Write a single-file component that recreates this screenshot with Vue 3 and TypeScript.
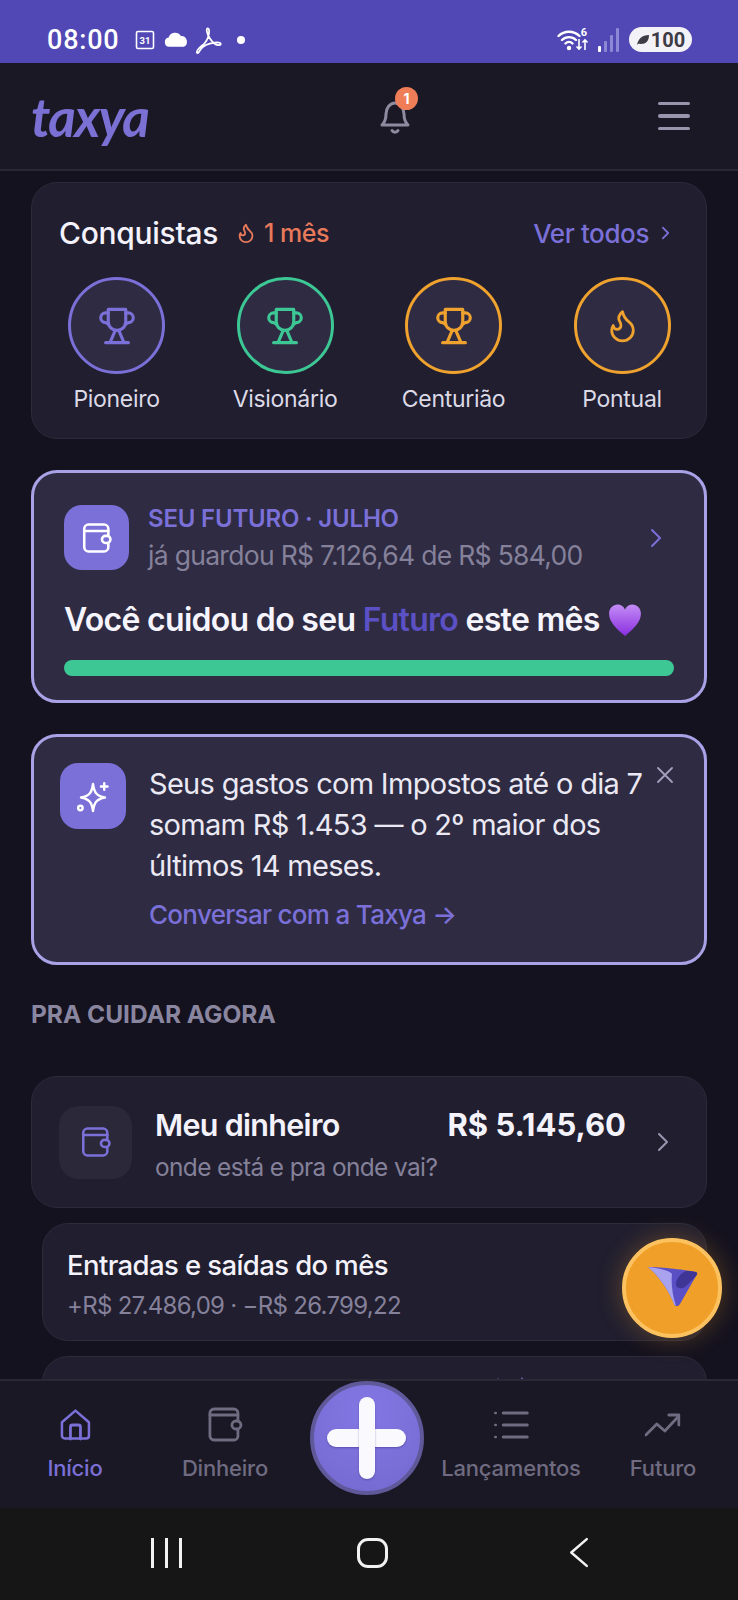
<template>
  <div class="app">
    <header class="status">
      <span class="time">08:00</span>
      <svg class="st-cal" viewBox="0 0 20 20"><rect x="1.5" y="1.5" width="17" height="17" rx="1.5" fill="none" stroke="#fff" stroke-width="1.6" /><text x="10" y="14" text-anchor="middle" font-size="9.5" font-weight="700" fill="#fff" font-family="Roboto, sans-serif">31</text></svg>
      <svg class="st-cloud" viewBox="0 0 24 14"><path d="M5 14a4.5 4.5 0 0 1-.6-8.9A6.5 6.5 0 0 1 16.2 3.6 5.5 5.5 0 0 1 19 14z" fill="#fff" /></svg>
      <svg class="st-pdf" viewBox="0 0 26 28"><path d="M2 26c-1.500-2 3-6 7-9 3-3 5-9 4.500-13-.3-2.500-2.500-2-2.200.5.5 5 5 11 8 13 2 1 5 1.500 5.500 0 .3-1.500-3-2-6-1.500-5 .8-11 3-13 6-1 1.500-2.800 5-3.800 4z" fill="none" stroke="#fff" stroke-width="1.700" stroke-linejoin="round" /></svg>
      <span class="st-dot"></span>
      <span class="st-space"></span>
      <svg class="st-wifi" viewBox="0 0 32 26">
        <path d="M1.500 9a15 15 0 0 1 21 0M5 13a10 10 0 0 1 14 0M8.500 16.500a5 5 0 0 1 7 0" fill="none" stroke="#fff" stroke-width="2.400" stroke-linecap="round" />
        <circle cx="12" cy="21" r="2.200" fill="#fff" />
        <text x="27" y="9" text-anchor="middle" font-size="11" font-weight="700" fill="#fff" font-family="Roboto, sans-serif">6</text>
        <path d="M22 12v10m-2.500-2.500L22 22l2.500-2.500M28 23V13m-2.500 2.500L28 13l2.500 2.500" fill="none" stroke="#fff" stroke-width="1.600" />
      </svg>
      <svg class="st-signal" viewBox="0 0 22 24">
        <rect x="0" y="18" width="3" height="6" rx="1" fill="#fff" />
        <rect x="6" y="13" width="3" height="11" rx="1" fill="#8d87d6" />
        <rect x="12" y="7" width="3" height="17" rx="1" fill="#8d87d6" />
        <rect x="18" y="0" width="3" height="24" rx="1" fill="#8d87d6" />
      </svg>
      <span class="battery">
        <svg viewBox="0 0 14 12"><path d="M1 11C2 5 6 1 13 1c0 6-3 9-8 9-1.500 0-2.500-.3-3 0z" fill="#3d3b46" /></svg>
        100
      </span>
    </header>

    <div class="topbar">
      <span class="logo">taxya</span>
      <div class="bell-wrap">
        <svg class="bell" viewBox="0 0 34 38" fill="none" stroke="#8e8a9f" stroke-width="3" stroke-linecap="round" stroke-linejoin="round">
          <path d="M4 28c2-2 4-5 4-11 0-6 4-11 9-11s9 5 9 11c0 6 2 9 4 11z" />
          <path d="M14 33.500a3.500 3.500 0 0 0 6 0" />
        </svg>
        <span class="badge">1</span>
      </div>
      <div class="burger"><i></i><i></i><i></i></div>
    </div>

    <main class="content">
      <section class="card ach">
        <div class="ach-head">
          <h2>Conquistas</h2>
          <span class="streak">
            <svg viewBox="0 0 24 24" fill="none" stroke="#e8795a" stroke-width="2" stroke-linecap="round" stroke-linejoin="round"><path :d="flamePath" /></svg>
            1 mês
          </span>
          <span class="see-all">Ver todos
            <svg viewBox="0 0 12 18" fill="none" stroke="#7b70d8" stroke-width="2" stroke-linecap="round" stroke-linejoin="round"><path d="M3 3l6 6-6 6" /></svg>
          </span>
        </div>
        <div class="ach-row">
          <div v-for="b in badges" :key="b.label" class="ach-item">
            <div class="ach-circle" :style="{ borderColor: b.color }">
              <svg :class="{ small: b.flame }" viewBox="0 0 24 24" fill="none" :stroke="b.color" stroke-width="1.800" stroke-linecap="round" stroke-linejoin="round">
                <template v-if="b.flame"><path :d="flamePath" /></template>
                <template v-else>
                  <path d="M7 2.500h10v7a5 5 0 0 1-10 0z" />
                  <path d="M7 4.500H5.500a2.800 2.800 0 0 0 0 5.600L7.300 11M17 4.500h1.500a2.800 2.800 0 0 1 0 5.600L16.700 11" />
                  <path d="M11 14.500L8 21.500M13 14.500l3 7M5.500 21.500h13" />
                </template>
              </svg>
            </div>
            <span>{{ b.label }}</span>
          </div>
        </div>
      </section>

      <section class="card hl future">
        <div class="future-top">
          <div class="icon-box solid">
            <svg viewBox="0 0 24 24" fill="none" stroke="#fff" stroke-width="1.800" stroke-linecap="round" stroke-linejoin="round"><rect x="3" y="2.500" width="17" height="19" rx="3" /><path d="M3 7h17" /><rect x="15.500" y="10.500" width="6" height="5" rx="2.500" fill="#7b70d8" /></svg>
          </div>
          <div class="future-text">
            <div class="eyebrow">SEU FUTURO · JULHO</div>
            <div class="future-sub">já guardou R$ 7.126,64 de R$ 584,00</div>
          </div>
          <svg class="chev purple" viewBox="0 0 12 20" fill="none" stroke="#7b70d8" stroke-width="2" stroke-linecap="round" stroke-linejoin="round"><path d="M2 2l8 8-8 8" /></svg>
        </div>
        <div class="future-main">Você cuidou do seu <b>Futuro</b> este mês<svg class="heart" viewBox="0 0 32 32">
            <defs><linearGradient id="heartG" x1="0" y1="0" x2="0" y2="1"><stop offset="0" stop-color="#c48cf5" /><stop offset="1" stop-color="#8a2fe0" /></linearGradient></defs>
            <path d="M16 31C8 24 1 18 1 10c0-5 4-8.500 8-8.500 3 0 5.500 1.500 7 4.500 1.500-3 4-4.500 7-4.500 4 0 8 3.500 8 8.500 0 8-7 14-15 21z" fill="url(#heartG)" />
          </svg></div>
        <div class="bar"></div>
      </section>

      <section class="card hl tip">
        <div class="icon-box solid tip-icon">
          <svg viewBox="0 0 24 24" fill="none" stroke="#fff" stroke-width="1.600" stroke-linecap="round" stroke-linejoin="round">
            <path d="M12 4c.8 6 2.500 8 8 9-5.500 1-7.200 3-8 9-.8-6-2.500-8-8-9 5.500-1 7.200-3 8-9z" />
            <path d="M19.500 3.500v4.400M17.300 5.700h4.400" />
            <circle cx="3.600" cy="20" r="1.500" />
          </svg>
        </div>
        <div class="tip-body">
          <p>Seus gastos com Impostos até o dia 7<br />somam R$ 1.453 — o 2º maior dos<br />últimos 14 meses.</p>
          <span class="tip-link">Conversar com a Taxya →</span>
        </div>
        <svg class="close" viewBox="0 0 18 18" fill="none" stroke="#a5a0bd" stroke-width="1.800" stroke-linecap="round"><path d="M2 2l14 14M16 2L2 16" /></svg>
      </section>

      <h3 class="section">PRA CUIDAR AGORA</h3>

      <section class="card money">
        <div class="icon-box soft">
          <svg viewBox="0 0 24 24" fill="none" stroke="#7b70d8" stroke-width="1.800" stroke-linecap="round" stroke-linejoin="round"><rect x="3" y="2.500" width="17" height="19" rx="3" /><path d="M3 7h17" /><rect x="15.500" y="10.500" width="6" height="5" rx="2.500" fill="#2a2839" /></svg>
        </div>
        <div class="money-text">
          <div class="money-line"><strong>Meu dinheiro</strong><strong class="amount">R$ 5.145,60</strong></div>
          <div class="muted">onde está e pra onde vai?</div>
        </div>
        <svg class="chev" viewBox="0 0 12 20" fill="none" stroke="#9a95ae" stroke-width="2" stroke-linecap="round" stroke-linejoin="round"><path d="M2 2l8 8-8 8" /></svg>
      </section>

      <section class="card sub">
        <div class="sub-title">Entradas e saídas do mês</div>
        <div class="muted">+R$ 27.486,09 · −R$ 26.799,22</div>
      </section>

      <section class="card sub clipped">
        <svg viewBox="0 0 36 6"><path d="M2 6l3-5 3 5zM26 6l3-6 3 6z" fill="#7b70d8" /></svg>
      </section>
    </main>

    <nav class="tabs">
      <div v-for="t in tabs" :key="t.label" class="tab" :class="[t.cls, { active: t.active }]">
        <svg viewBox="0 0 36 36" fill="none" :stroke="t.active ? '#7b70d8' : '#6f6b80'" stroke-width="2.800" stroke-linecap="round" stroke-linejoin="round" v-html="t.icon"></svg>
        <span>{{ t.label }}</span>
      </div>
    </nav>

    <div class="sysnav">
      <div class="sys-lines"><i></i><i></i><i></i></div>
      <div class="sys-home"></div>
      <svg class="sys-back" viewBox="0 0 20 30" fill="none" stroke="#f2f2f2" stroke-width="2.400" stroke-linecap="round" stroke-linejoin="round"><path d="M18 2L3 15l15 13" /></svg>
    </div>

    <div class="plus"><i class="h"></i><i class="v"></i></div>

    <div class="fab">
      <svg viewBox="0 0 51 42">
        <path d="M1 1C15 1 40 4 49 6c2 1 1 3 0 4L33 38c-2 3-5 3-6 0C22 25 12 10 1 1z" fill="#5a4fc4" />
        <path d="M1 1c9 1 21 3 24 7-1 8 0 20 4 32-1 0-1.500-1-2-2C22 25 12 10 1 1z" fill="#a9a2ef" />
        <path d="M39 5c5 0 9 1 10 1 2 1 1 3 0 4L38 21c-5 3-10 0-9-4 1-5 5-10 10-12z" fill="#3e3597" />
      </svg>
    </div>
  </div>
</template>

<script setup lang="ts">
interface Badge {
  label: string;
  color: string;
  flame?: boolean;
}

interface Tab {
  label: string;
  icon: string;
  cls: string;
  active?: boolean;
}

const flamePath =
  'M8.5 14.5A2.5 2.5 0 0 0 11 12c0-1.38-.5-2-1-3-1.072-2.143-.224-4.054 2-6 .5 2.5 2 4.9 4 6.5 2 1.6 3 3.5 3 5.5a7 7 0 1 1-14 0c0-1.153.433-2.294 1-3a2.5 2.5 0 0 0 2.5 2.5z';

const badges: Badge[] = [
  { label: 'Pioneiro', color: '#7b70d8' },
  { label: 'Visionário', color: '#3cc795' },
  { label: 'Centurião', color: '#f0a22e' },
  { label: 'Pontual', color: '#f0a22e', flame: true },
];

const tabs: Tab[] = [
  {
    label: 'Início',
    cls: 't1',
    active: true,
    icon: '<path d="M3 15L18 2l15 13v15a3 3 0 0 1-3 3H6a3 3 0 0 1-3-3z" transform="translate(1.800 1.800) scale(.9)"/><path d="M13 32V20a2 2 0 0 1 2-2h6a2 2 0 0 1 2 2v12"/>',
  },
  {
    label: 'Dinheiro',
    cls: 't2',
    icon: '<rect x="3" y="2" width="28" height="31" rx="4"/><path d="M3 8h28"/><rect x="25" y="14" width="9" height="8" rx="4" fill="#1a1825"/>',
  },
  {
    label: 'Lançamentos',
    cls: 't3',
    icon: '<path d="M10 6h24M10 18h24M10 30h24" stroke-width="3"/><path d="M2 6h.5M2 18h.5M2 30h.5" stroke-width="2.500"/>',
  },
  {
    label: 'Futuro',
    cls: 't4',
    icon: '<path d="M1 28l11-11 8 7L34 9"/><path d="M24 8h10v10"/>',
  },
];
</script>

<style scoped>
.app {
  position: relative;
  display: flex;
  flex-direction: column;
  width: 738px;
  height: 1600px;
  overflow: hidden;
  background: #14121f;
  color: #f4f2fb;
  font-family: Inter, 'Noto Sans', sans-serif;
}

.status {
  display: flex;
  align-items: center;
  flex: none;
  height: 63px;
  padding: 16px 46px 0 47px;
  box-sizing: border-box;
  background: #5148b5;
  color: #fff;
}
.time {
  font: 500 27px Roboto, sans-serif;
  letter-spacing: 0.800px;
  width: 88px;
}
.st-cal { width: 20px; height: 20px; margin-right: 9px; }
.st-cloud { width: 25px; height: 15px; margin-right: 6px; }
.st-pdf { width: 27px; height: 29px; margin-top: 2px; margin-right: 15px; }
.st-dot { width: 8px; height: 8px; border-radius: 50%; background: #fff; }
.st-space { flex: 1; }
.st-wifi { width: 32px; height: 26px; margin-right: 9px; }
.st-signal { width: 22px; height: 24px; margin-right: 9px; }
.battery {
  display: flex;
  align-items: center;
  justify-content: center;
  gap: 1px;
  width: 63px;
  height: 25px;
  border-radius: 13px;
  background: #f3f2f6;
  color: #3d3b46;
  font: 700 20px Roboto, sans-serif;
}
.battery svg { width: 14px; height: 12px; }

.topbar {
  display: grid;
  grid-template-columns: 347px 34px 1fr;
  align-items: center;
  flex: none;
  height: 108px;
  padding: 0 48px 0 31px;
  box-sizing: border-box;
  background: #1a1825;
  border-bottom: 2px solid #2a2835;
}
.logo {
  font: italic 700 53px Lato, sans-serif;
  letter-spacing: -1.500px;
  color: #7b70d4;
}
.bell-wrap { position: relative; width: 34px; height: 38px; }
.bell { width: 34px; height: 38px; }
.badge {
  position: absolute;
  top: -10px;
  left: 17px;
  width: 23px;
  height: 23px;
  border-radius: 50%;
  background: #ee7d58;
  color: #fff;
  font-size: 14px;
  font-weight: 700;
  line-height: 23px;
  text-align: center;
}
.burger { display: flex; flex-direction: column; gap: 9px; width: 32px; justify-self: end; }
.burger i { height: 3.500px; border-radius: 2px; background: #9a95ae; }

.content {
  flex: 1;
  min-height: 0;
  overflow: hidden;
  padding: 11px 31px 0;
}
.card {
  box-sizing: border-box;
  border: 1px solid #2c2a3b;
  border-radius: 26px;
  background: #201e2f;
}
.hl {
  border: 3px solid #a9a2e6;
  background: #2e2b43;
}

.ach { height: 257px; padding: 28px 27px 0; }
.ach-head { display: flex; align-items: center; height: 44px; }
.ach-head h2 { margin: 0; font-size: 30px; font-weight: 500; letter-spacing: -0.300px; color: #f4f2fb; }
.streak {
  display: flex;
  align-items: center;
  gap: 7px;
  margin-left: 17px;
  font-size: 25px;
  font-weight: 500;
  letter-spacing: -0.500px;
  color: #e8795a;
}
.streak svg { width: 22px; height: 24px; }
.see-all {
  display: flex;
  align-items: center;
  gap: 11px;
  margin-left: auto;
  margin-right: 8px;
  font-size: 26px;
  font-weight: 500;
  letter-spacing: -0.400px;
  color: #7b70d8;
}
.see-all svg { width: 11px; height: 16px; }
.ach-row {
  display: grid;
  grid-template-columns: repeat(4, 168.500px);
  margin: 22px 0 0 -26.700px;
}
.ach-item { display: flex; flex-direction: column; align-items: center; gap: 11px; }
.ach-circle {
  display: flex;
  align-items: center;
  justify-content: center;
  box-sizing: border-box;
  width: 97px;
  height: 97px;
  border: 3px solid;
  border-radius: 50%;
  background: #2e2b43;
}
.ach-circle svg { width: 42px; height: 42px; }
.ach-circle svg.small { width: 37px; height: 37px; }
.ach-item span { font-size: 23px; color: #dcdae6; letter-spacing: -0.300px; }

.future { height: 233px; margin-top: 31px; padding: 31px 30px 0; }
.future-top { display: flex; align-items: center; }
.icon-box {
  display: flex;
  align-items: center;
  justify-content: center;
  flex: none;
  width: 65px;
  height: 65px;
  border-radius: 18px;
}
.icon-box svg { width: 34px; height: 34px; }
.solid { background: #7b70d8; }
.soft { width: 73px; height: 73px; background: #2a2839; border-radius: 20px; }
.future-text { flex: 1; margin-left: 19px; }
.eyebrow { font-size: 24px; font-weight: 600; letter-spacing: -0.200px; color: #7b70d8; }
.future-sub { margin-top: 6px; font-size: 26.500px; letter-spacing: -0.700px; color: #85819a; }
.chev { width: 12px; height: 20px; flex: none; }
.chev.purple { margin-right: 12px; }
.future-main {
  display: flex;
  align-items: center;
  margin-top: 29px;
  font-size: 32px;
  font-weight: 600;
  letter-spacing: -0.700px;
  white-space: pre;
  color: #f6f4fc;
}
.future-main b { font-weight: 600; color: #5b50c4; }
.heart { width: 34px; height: 34px; margin-left: 8px; }
.bar { height: 16px; margin-top: 21px; border-radius: 8px; background: #3cc795; }

.tip {
  position: relative;
  display: flex;
  height: 231px;
  margin-top: 31px;
  padding: 26px 0 0 26px;
}
.tip-icon { width: 66px; height: 66px; }
.tip-icon svg { width: 36px; height: 36px; }
.tip-body { margin-left: 23px; }
.tip-body p {
  margin: 0;
  font-size: 29px;
  line-height: 41px;
  letter-spacing: -0.700px;
  color: #ebe9f3;
}
.tip-link {
  display: block;
  margin-top: 13px;
  font-size: 26px;
  font-weight: 500;
  letter-spacing: -0.700px;
  color: #7b70d8;
}
.close { position: absolute; top: 29px; right: 30px; width: 18px; height: 18px; }

.section {
  margin: 34px 0 0;
  font-size: 24.500px;
  font-weight: 700;
  letter-spacing: 0;
  color: #8a86a0;
}

.money {
  display: flex;
  align-items: center;
  height: 132px;
  margin-top: 47px;
  padding: 0 37px 0 27px;
}
.money-text { flex: 1; margin-left: 23px; padding: 3px 31px 0 0; }
.money-line { display: flex; justify-content: space-between; font-size: 30.500px; letter-spacing: -0.700px; }
.money-line strong { font-weight: 600; }
.money-line .amount { font-size: 31px; font-weight: 700; letter-spacing: 0; }
.muted { font-size: 24px; letter-spacing: -0.600px; color: #85819a; }
.money .muted { margin-top: 9px; font-size: 24.400px; }

.sub { height: 118px; margin: 15px 0 0 11px; padding: 24px 24px 0; }
.sub-title { font-size: 27.500px; font-weight: 500; letter-spacing: -0.600px; }
.sub .muted { margin-top: 9px; letter-spacing: -0.700px; }
.clipped { height: 100px; padding: 20px 0 0 450px; }
.clipped svg { display: block; width: 36px; height: 6px; }

.tabs {
  position: relative;
  display: flex;
  flex: none;
  height: 129px;
  box-sizing: border-box;
  border-top: 2px solid #2a2835;
  background: #1a1825;
}
.tab {
  position: absolute;
  top: 26px;
  display: flex;
  flex-direction: column;
  align-items: center;
  transform: translateX(-50%);
  gap: 12px;
  font-size: 22px;
  font-weight: 500;
  letter-spacing: -0.200px;
  white-space: nowrap;
  color: #6f6b80;
}
.tab svg { width: 36px; height: 36px; }
.tab.active { color: #7b70d8; }
.t1 { left: 75px; }
.t2 { left: 225px; }
.t3 { left: 511px; }
.t4 { left: 663px; }

.sysnav {
  position: relative;
  flex: none;
  height: 92px;
  background: #161616;
}
.sys-lines { position: absolute; left: 151px; top: 30px; display: flex; gap: 11px; }
.sys-lines i { width: 3px; height: 30px; background: #f2f2f2; }
.sys-home {
  position: absolute;
  left: 357px;
  top: 30px;
  box-sizing: border-box;
  width: 31px;
  height: 30px;
  border: 3px solid #f2f2f2;
  border-radius: 11px;
}
.sys-back { position: absolute; left: 568px; top: 29px; width: 21px; height: 31px; }

.plus {
  position: absolute;
  left: 310px;
  top: 1381px;
  box-sizing: border-box;
  width: 114px;
  height: 114px;
  border: 4px solid #5f5899;
  border-radius: 50%;
  background: radial-gradient(circle at 50% 25%, #8377e4, #7469cf);
}
.plus i { position: absolute; border-radius: 9px; background: #faf9fe; box-shadow: 0 1px 2px rgba(40, 30, 110, 0.4); }
.plus .h { left: 13px; top: 44px; width: 79px; height: 18px; }
.plus .v { left: 45px; top: 12px; width: 16px; height: 82px; }

.fab {
  position: absolute;
  left: 622px;
  top: 1238px;
  display: flex;
  align-items: center;
  justify-content: center;
  box-sizing: border-box;
  width: 100px;
  height: 100px;
  border: 4px solid #fcc25f;
  border-radius: 50%;
  background: #f0a028;
  box-shadow: 0 0 26px rgba(240, 160, 40, 0.32);
}
.fab svg { width: 51px; height: 42px; margin-top: -2px; }
</style>

<style>
html, body { margin: 0; background: #14121f; }
</style>
